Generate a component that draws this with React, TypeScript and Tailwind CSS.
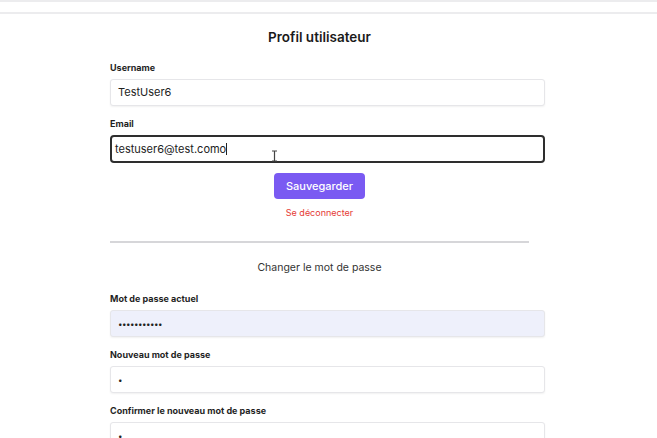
import React from 'react';

const font = { fontFamily: 'Inter, "Noto Sans", sans-serif' };

const Label: React.FC<{ children: React.ReactNode }> = ({ children }) => (
  <div className="h-[12px] text-[9px] leading-[12px] font-bold text-[#1f1f1f]">{children}</div>
);

const Field: React.FC<{ value: string; tinted?: boolean; dots?: boolean }> = ({ value, tinted, dots }) => (
  <div
    className={`mt-[5px] w-[435px] h-[27px] rounded-[3px] border border-[#e6e6e9] shadow-[0_1px_2px_rgba(0,0,0,0.06)] flex items-center px-[7px] ${
      tinted ? 'bg-[#eef0fb]' : 'bg-white'
    }`}
  >
    <span className={dots ? 'text-[8px] tracking-[-0.5px] text-[#222]' : 'text-[11px] text-[#222]'}>{value}</span>
  </div>
);

export default function App() {
  return (
    <div className="w-[657px] h-[438px] bg-white overflow-hidden" style={font}>
      <div className="h-[2px] bg-[#ececee]" />
      <div className="h-[10px] bg-white" />
      <div className="h-[2px] bg-[#ececee]" />

      <div className="pl-[110px]">
        <div className="w-[419px] flex flex-col">
          <h1 className="mt-[13px] text-center text-[13.5px] leading-[20px] font-semibold text-[#1a1a1a]">Profil utilisateur</h1>

          <div className="mt-[15px]">
            <Label>Username</Label>
            <Field value="TestUser6" />
          </div>

          <div className="mt-[12px]">
            <Label>Email</Label>
            <div className="relative mt-[5px] w-[435px] h-[28px] rounded-[4px] border-2 border-[#2e2e2e] bg-white flex items-center px-[3px]">
              <span className="text-[11px] text-[#222]">testuser6@test.como</span>
              <span className="w-px h-[12px] bg-[#222]" />
              <svg className="absolute left-[159px] top-[13px]" width="7" height="12" viewBox="0 0 7 12">
                <path d="M1 1h5M3.5 1v10M1 11h5" stroke="#444" strokeWidth="1.2" fill="none" />
              </svg>
            </div>
          </div>

          <div className="mt-[10px] flex justify-center">
            <button className="w-[91px] h-[26px] rounded-[4px] bg-[#7a5af2] text-white text-[11px] font-medium">
              Sauvegarder
            </button>
          </div>
          <div className="mt-[8px] text-center text-[9px] leading-[12px] text-[#e53935]">Se déconnecter</div>

          <div className="mt-[22px] h-[2px] bg-[#d6d6d9]" />

          <div className="mt-[18px] text-center text-[10.5px] leading-[14px] text-[#333]">Changer le mot de passe</div>

          <div className="mt-[18px]">
            <Label>Mot de passe actuel</Label>
            <Field value="•••••••••••" tinted dots />
          </div>
          <div className="mt-[12px]">
            <Label>Nouveau mot de passe</Label>
            <Field value="•" dots />
          </div>
          <div className="mt-[12px]">
            <Label>Confirmer le nouveau mot de passe</Label>
            <Field value="•" dots />
          </div>
        </div>
      </div>
    </div>
  );
}
